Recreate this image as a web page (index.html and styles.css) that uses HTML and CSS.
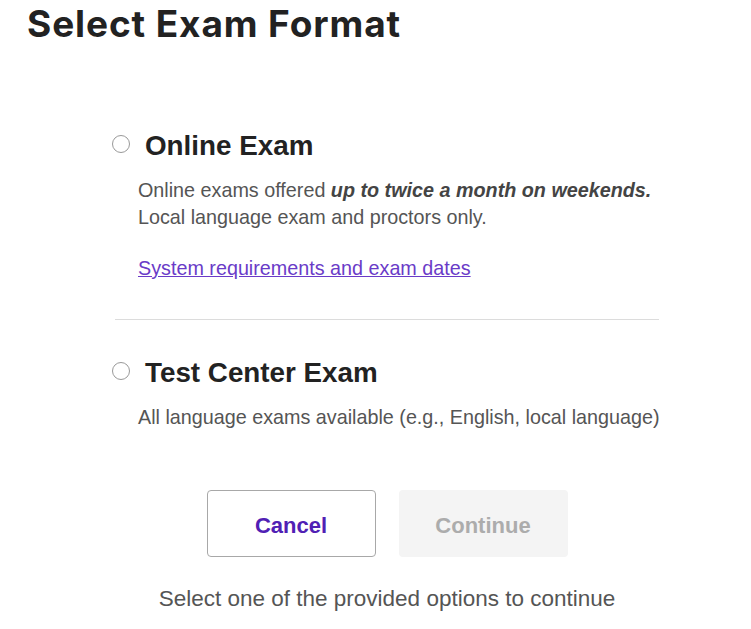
FILE: index.html
```html
<!DOCTYPE html>
<html lang="en">

<head>
    <meta charset="UTF-8">
    <meta name="viewport" content="width=device-width, initial-scale=1.0">
    <title>Select Exam Format</title>
    <link rel="stylesheet" href="styles.css">
</head>

<body>
    <h1 class="title">Select Exam Format</h1>

    <div class="format">
        <div class="option">
            <div class="option-head">
                <span class="radio"></span>
                <span class="option-name">Online Exam</span>
            </div>
            <p class="option-desc">Online exams offered <strong><em>up to twice a month on weekends.</em></strong><br>Local language exam and proctors only.</p>
            <a class="option-link" href="#">System requirements and exam dates</a>
        </div>

        <hr class="divider">

        <div class="option">
            <div class="option-head">
                <span class="radio"></span>
                <span class="option-name">Test Center Exam</span>
            </div>
            <p class="option-desc">All language exams available (e.g., English, local language)</p>
        </div>

        <div class="actions">
            <button class="btn btn-cancel">Cancel</button>
            <button class="btn btn-continue" disabled>Continue</button>
        </div>

        <p class="hint">Select one of the provided options to continue</p>
    </div>
</body>

</html>
```

FILE: styles.css
```css
body {
    margin: 0;
    background-color: #fff;
    font-family: 'Liberation Sans', Arial, sans-serif;
    color: #222;
}

.title {
    margin: 0 0 0 27px;
    font-family: 'Inter', sans-serif;
    font-size: 37px;
    font-weight: 700;
    line-height: 48px;
    letter-spacing: 0.9px;
    color: #222;
}

.format {
    width: 544px;
    margin: 82px 0 0 115px;
}

.option-head {
    display: flex;
    align-items: flex-start;
}

.radio {
    box-sizing: border-box;
    width: 18px;
    height: 18px;
    margin: 4.5px 15px 0 -3px;
    border: 1px solid #999;
    border-radius: 50%;
    flex-shrink: 0;
}

.option-name {
    font-size: 27.8px;
    font-weight: 700;
    line-height: 32px;
    color: #222;
}

.option-desc {
    margin: 15px 0 0 23px;
    font-size: 19.75px;
    line-height: 27px;
    white-space: nowrap;
    color: #555;
}

.option-desc strong {
    color: #444;
}

.option-link {
    display: inline-block;
    margin: 24px 0 0 23px;
    font-size: 19.75px;
    line-height: 27px;
    color: #6a3bc8;
}

.divider {
    margin: 37px 0 0 0;
    border: none;
    border-top: 1px solid #dcdcdc;
}

.divider + .option {
    margin-top: 37px;
}

.actions {
    display: flex;
    justify-content: center;
    gap: 23px;
    margin-top: 59px;
}

.btn {
    width: 169px;
    height: 67px;
    padding: 4px 0 0 0;
    border-radius: 4px;
    font-family: 'Liberation Sans', Arial, sans-serif;
    font-size: 22px;
    font-weight: 700;
}

.btn-cancel {
    background-color: #fff;
    border: 1px solid #a8a8a8;
    color: #5020b4;
    cursor: pointer;
}

.btn-continue {
    background-color: #f4f4f4;
    border: none;
    color: #acacac;
}

.hint {
    margin: 29px 0 0 0;
    font-size: 22.5px;
    line-height: 26px;
    text-align: center;
    color: #555;
}
```
